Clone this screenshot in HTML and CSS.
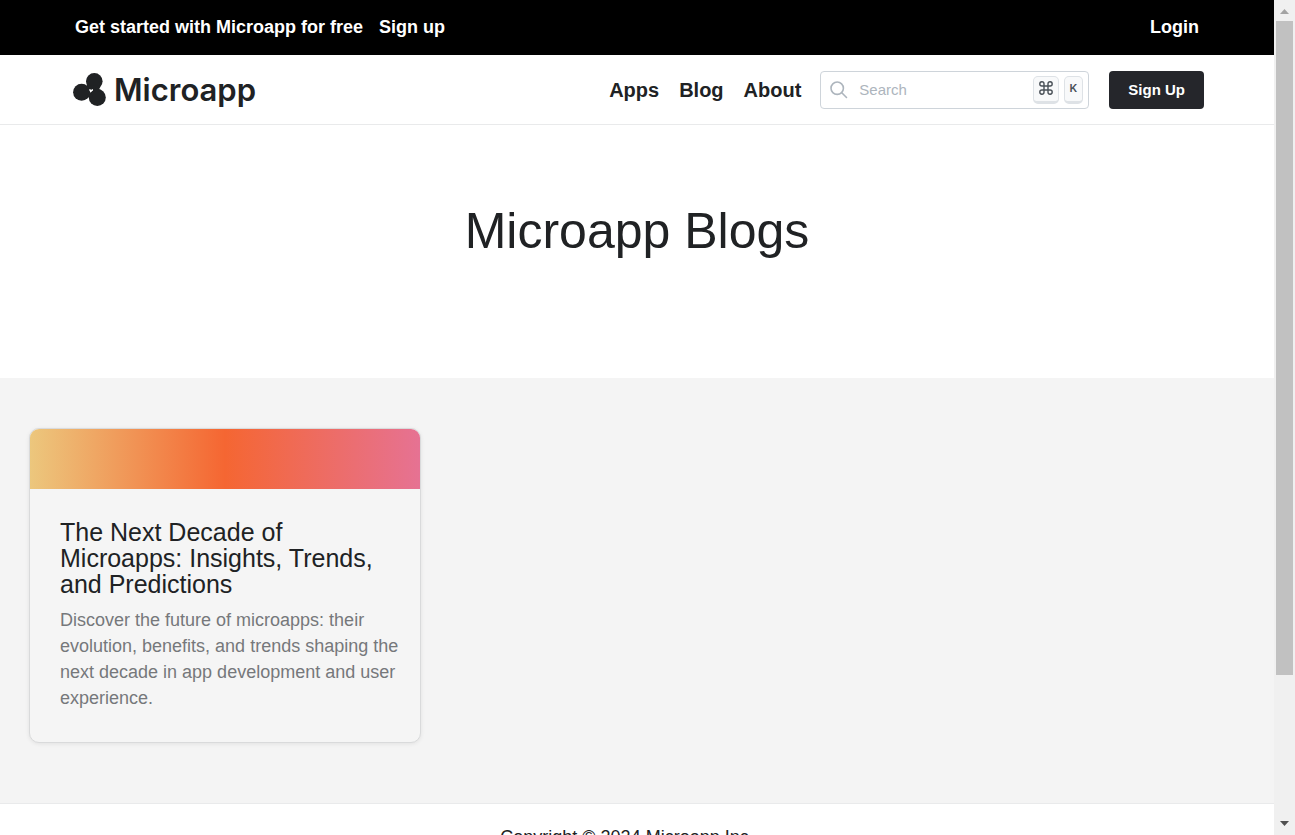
FILE: index.html
```html
<!DOCTYPE html>
<html lang="en">
<head>
<meta charset="utf-8">
<title>Microapp Blogs</title>
<link rel="stylesheet" href="styles.css">
</head>
<body>
<div class="page">
  <div class="topbar">
    <a class="topbar-link" href="#">Get started with Microapp for free</a>
    <a class="topbar-link" href="#">Sign up</a>
    <a class="topbar-link topbar-login" href="#">Login</a>
  </div>
  <header class="header">
    <a class="logo" href="#">
      <svg class="logo-mark" viewBox="0 0 34 34" width="34" height="34" aria-hidden="true">
        <circle cx="21.300" cy="8.300" r="8.300"/><circle cx="8.600" cy="19.300" r="8.500"/><circle cx="24.300" cy="24.600" r="8.500"/>
        <path d="M14 11L19 13V17L13 16ZM14 22L18 19L20 24L16 25ZM20 13L26 12L27 19L20 18Z"/>
        <path d="M15.900 16.300L20 16.900L17.600 19.600Z" fill="#fff"/>
      </svg>
      <span class="logo-text">Microapp</span>
    </a>
    <nav class="nav">
      <a class="nav-link" href="#">Apps</a>
      <a class="nav-link" href="#">Blog</a>
      <a class="nav-link" href="#">About</a>
    </nav>
    <form class="search">
      <svg viewBox="0 0 18 18" width="18" height="18" fill="none" stroke="#adb5bd" stroke-width="1.6" stroke-linecap="round" aria-hidden="true"><circle cx="7.200" cy="7.200" r="6.200"/><path d="M11.800 11.800L16.500 16.500"/></svg>
      <input class="search-input" type="text" placeholder="Search" aria-label="Search">
      <kbd class="key"><svg viewBox="0 0 14 14" width="14" height="14" fill="none" stroke="#495057" stroke-width="1.400" role="img" aria-label="Command"><path d="M5 5V2.800A2.100 2.100 0 1 0 2.900 5H11.100A2.100 2.100 0 1 0 9 2.800V11.200A2.100 2.100 0 1 0 11.100 9H2.900A2.100 2.100 0 1 0 5 11.200Z"/></svg></kbd>
      <kbd class="key">K</kbd>
    </form>
    <button class="signup" type="button">Sign Up</button>
  </header>
  <section class="hero"><h1 class="hero-title">Microapp Blogs</h1></section>
  <main class="posts">
    <article class="card">
      <div class="card-banner"></div>
      <div class="card-body">
        <h2 class="card-title">The Next Decade of Microapps: Insights, Trends, and Predictions</h2>
        <p class="card-text">Discover the future of microapps: their evolution, benefits, and trends shaping the next decade in app development and user experience.</p>
      </div>
    </article>
  </main>
  <footer class="footer">Copyright © 2024 Microapp Inc.</footer>
</div>
<div class="scrollbar" aria-hidden="true">
  <svg class="scroll-arrow" viewBox="0 0 21 21" width="21" height="21"><path d="M6 14H15L10.500 9Z" fill="#a3a3a3"/></svg>
  <div class="scroll-track"><div class="scroll-thumb"></div></div>
  <svg class="scroll-arrow" viewBox="0 0 21 21" width="21" height="21"><path d="M6 7H15L10.500 12Z" fill="#505050"/></svg>
</div>
</body>
</html>
```
FILE: styles.css
```css
* { box-sizing: border-box; }
body {
  margin: 0;
  display: flex;
  height: 100vh;
  overflow: hidden;
  background: #fff;
  color: #202224;
  font-family: "Liberation Sans", Arial, sans-serif;
}
a { color: inherit; text-decoration: none; }
.page { flex: 1; min-width: 0; overflow: hidden; }
.topbar {
  display: flex;
  gap: 16px;
  padding: 16px 75px 17px;
  background: #000;
  color: #fff;
  font-size: 18px;
  line-height: 22px;
  font-weight: 700;
}
.topbar-login { margin-left: auto; }
.header {
  display: flex;
  align-items: center;
  padding: 16px 70px 15px 73px;
  border-bottom: 1px solid #e9eaeb;
}
.logo { display: flex; align-items: center; gap: 7px; margin-right: auto; }
.logo-mark { fill: #202224; }
.logo-text { font: 600 31px/36px Inter, sans-serif; }
.nav { display: flex; gap: 20px; margin-right: 19px; font-size: 20px; line-height: 24px; font-weight: 700; }
.search {
  display: flex;
  align-items: center;
  width: 269px;
  height: 38px;
  padding: 0 5px 0 9px;
  border: 1px solid #ced4da;
  border-radius: 4px;
  margin-right: 20px;
}
.search-input {
  flex: 1;
  min-width: 0;
  margin-left: 11px;
  padding: 0;
  border: 0;
  outline: 0;
  background: transparent;
  font: 15px/20px "Liberation Sans", Arial, sans-serif;
}
.search-input::placeholder { color: #adb5bd; opacity: 1; }
.key {
  display: flex;
  align-items: center;
  height: 28px;
  padding: 0 5px 2px;
  margin-left: 5px;
  border: 1px solid #dee2e6;
  border-bottom-width: 3px;
  border-radius: 5px;
  background: #f8f9fa;
  color: #495057;
  font: 600 11px/17px Inter, sans-serif;
}
.signup {
  height: 38px;
  padding: 0 19px;
  border: 0;
  border-radius: 4px;
  background: #25262b;
  color: #fff;
  font: 700 15px/20px "Liberation Sans", Arial, sans-serif;
}
.hero { padding: 76px 20px 117px; text-align: center; }
.hero-title { margin: 0; font-size: 50px; line-height: 60px; font-weight: 400; }
.posts { padding: 50px 29px 60px; background: #f4f4f4; border-bottom: 1px solid #e9eaeb; }
.card {
  max-width: 392px;
  overflow: hidden;
  border: 1px solid #d9dadb;
  border-radius: 10px;
  background: #f5f5f5;
  box-shadow: 0 1px 4px rgba(0, 0, 0, 0.08);
}
.card-banner { height: 60px; background: linear-gradient(90deg, #ecc77d, #f56632 50%, #e67293); }
.card-body { padding: 30px 20px 31px 30px; }
.card-title { margin: 0 0 10px; font-size: 25px; line-height: 26px; font-weight: 400; }
.card-text { margin: 0; color: #76787b; font-size: 18px; line-height: 26px; }
.footer { padding: 22px 20px 30px 0; text-align: center; font-size: 18px; line-height: 22px; }
.scrollbar { display: flex; flex-direction: column; width: 21px; background: #f0f0f0; }
.scroll-arrow { flex: none; }
.scroll-track { flex: 1; padding: 0 2px; }
.scroll-thumb { height: 82.5%; background: #c1c1c1; }
```
